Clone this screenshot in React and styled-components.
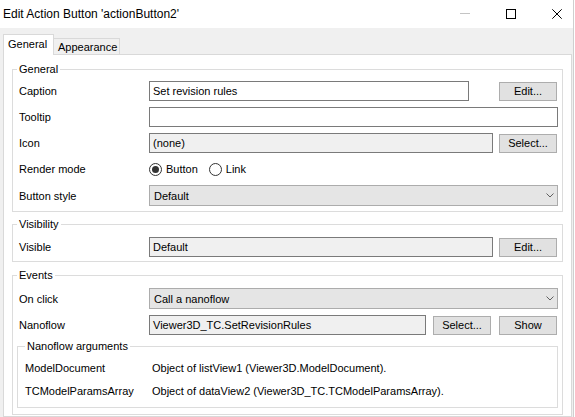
import React from "react";
import styled, { createGlobalStyle } from "styled-components";

const GlobalStyle = createGlobalStyle`
  html, body {
    margin: 0;
    padding: 0;
    background: #fff;
  }
  * {
    box-sizing: border-box;
  }
`;

const Window = styled.div`
  width: 574px;
  height: 417px;
  border-right: 1px solid #cfcfcf;
  background: #f0f0f0;
  overflow: hidden;
  display: flex;
  flex-direction: column;
  font-family: "Liberation Sans", Arial, sans-serif;
  font-size: 11px;
  color: #000;
`;

const TitleBar = styled.div`
  height: 28px;
  flex: none;
  display: flex;
  align-items: center;
  background: #fff;
`;

const Title = styled.div`
  flex: 1;
  padding-left: 3px;
  font-size: 12px;
  line-height: 16px;
  white-space: nowrap;
`;

const WindowControls = styled.div`
  display: flex;
  margin-right: -7px;
`;

const ControlButton = styled.div`
  width: 46px;
  height: 28px;
  display: flex;
  align-items: center;
  justify-content: center;
`;

const Body = styled.div`
  flex: 1;
  display: flex;
  flex-direction: column;
  padding-top: 6px;
  min-height: 0;
`;

const TabStrip = styled.div`
  display: flex;
  align-items: flex-end;
  height: 20px;
  padding-left: 3px;
  flex: none;
`;

const Tab = styled.div`
  display: flex;
  align-items: center;
  white-space: nowrap;
  padding-left: 4px;
  border: 1px solid #d9d9d9;
  border-bottom: none;
  ${({ $active }) =>
    $active
      ? `
    width: 51px;
    height: 21px;
    margin-bottom: -1px;
    padding-bottom: 2px;
    background: #fff;
    position: relative;
    z-index: 1;
  `
      : `
    width: 66px;
    height: 16px;
    border-left: none;
    background: #f0f0f0;
  `}
`;

const TabPanel = styled.div`
  margin-left: 3px;
  width: 569px;
  flex: 1;
  background: #fff;
  border: 1px solid #d9d9d9;
  padding: 6px 8px 1px;
  display: flex;
  flex-direction: column;
  gap: 4px;
`;

const Group = styled.fieldset`
  margin: ${({ $mt }) => $mt || 0}px 0 0;
  padding: 0 ${({ $px }) => $px ?? 4}px ${({ $pb }) => $pb}px;
  border: 1px solid #dcdcdc;
  min-width: 0;
`;

const Legend = styled.legend`
  padding: 0 2px;
  line-height: 16px;
  font-size: 11px;
`;

const Rows = styled.div`
  display: flex;
  flex-direction: column;
  gap: ${({ $gap }) => $gap ?? 6}px;
  margin-top: ${({ $mt }) => $mt}px;
`;

const Row = styled.div`
  display: grid;
  grid-template-columns: ${({ $labelWidth }) => $labelWidth || 132}px 1fr;
  align-items: center;
  height: ${({ $h }) => $h || 20}px;
`;

const Label = styled.div`
  padding-left: ${({ $pl }) => $pl ?? 2}px;
  white-space: nowrap;
`;

const Value = styled.div`
  white-space: nowrap;
`;

const Field = styled.div`
  display: flex;
  align-items: center;
  gap: ${({ $gap }) => $gap || 0}px;
  height: 100%;
`;

const TextBox = styled.div`
  height: 20px;
  border: 1px solid #7a7a7a;
  background: ${({ $readOnly }) => ($readOnly ? "#f0f0f0" : "#fff")};
  padding: 0 3px;
  line-height: 18px;
  white-space: nowrap;
  overflow: hidden;
  ${({ $width }) => ($width ? `width: ${$width}px; flex: none;` : "flex: 1;")}
`;

const PushButton = styled.button`
  width: 58px;
  height: 19px;
  flex: none;
  padding: 0;
  margin: ${({ $auto }) => ($auto ? "0 1px 0 auto" : "0")};
  background: #e1e1e1;
  border: 1px solid #adadad;
  border-radius: 0;
  font: inherit;
  color: #000;
  line-height: 17px;
  text-align: center;
`;

const Buttons = styled.div`
  display: flex;
  gap: 8px;
  margin-right: 1px;
`;

const ComboBox = styled.div`
  height: 21px;
  display: flex;
  align-items: center;
  justify-content: space-between;
  background: #e5e5e5;
  border: 1px solid #acacac;
  padding: 0 3px 0 4px;
`;

const RadioGroup = styled.div`
  display: flex;
  align-items: center;
  gap: 11px;
`;

const RadioOption = styled.div`
  display: flex;
  align-items: center;
  gap: 4px;
`;

const RadioCircle = styled.span`
  width: 13px;
  height: 13px;
  border: 1px solid #333;
  border-radius: 50%;
  display: flex;
  align-items: center;
  justify-content: center;
  background: #fff;

  &::after {
    content: "";
    display: ${({ $checked }) => ($checked ? "block" : "none")};
    width: 7px;
    height: 7px;
    border-radius: 50%;
    background: #333;
  }
`;

const Chevron = () => (
  <svg width="8" height="5" viewBox="0 0 8 5">
    <polyline points="0.5,0.5 4,4 7.5,0.5" fill="none" stroke="#606060" strokeWidth="1" />
  </svg>
);

const Radio = ({ checked, children }) => (
  <RadioOption>
    <RadioCircle $checked={checked} />
    {children}
  </RadioOption>
);

const App = () => {
  return (
    <>
      <GlobalStyle />
      <Window>
        <TitleBar>
          <Title>Edit Action Button 'actionButton2'</Title>
          <WindowControls>
            <ControlButton>
              <svg width="10" height="10" viewBox="0 0 10 10">
                <line x1="0" y1="4.5" x2="10" y2="4.5" stroke="#c4c4c4" strokeWidth="1" />
              </svg>
            </ControlButton>
            <ControlButton>
              <svg width="10" height="10" viewBox="0 0 10 10">
                <rect x="0.5" y="0.5" width="9" height="9" fill="none" stroke="#000" strokeWidth="1" />
              </svg>
            </ControlButton>
            <ControlButton>
              <svg width="10" height="10" viewBox="0 0 10 10">
                <path d="M0.3 0.3 L9.7 9.7 M9.7 0.3 L0.3 9.7" stroke="#000" strokeWidth="1" />
              </svg>
            </ControlButton>
          </WindowControls>
        </TitleBar>

        <Body>
          <TabStrip>
            <Tab $active>General</Tab>
            <Tab>Appearance</Tab>
          </TabStrip>

          <TabPanel>
            <Group $pb={5}>
              <Legend>General</Legend>
              <Rows $mt={4}>
                <Row>
                  <Label>Caption</Label>
                  <Field>
                    <TextBox $width={320}>Set revision rules</TextBox>
                    <PushButton $auto>Edit...</PushButton>
                  </Field>
                </Row>
                <Row>
                  <Label>Tooltip</Label>
                  <Field>
                    <TextBox />
                  </Field>
                </Row>
                <Row>
                  <Label>Icon</Label>
                  <Field $gap={6}>
                    <TextBox $readOnly>(none)</TextBox>
                    <Buttons>
                      <PushButton>Select...</PushButton>
                    </Buttons>
                  </Field>
                </Row>
                <Row>
                  <Label>Render mode</Label>
                  <RadioGroup>
                    <Radio checked>Button</Radio>
                    <Radio>Link</Radio>
                  </RadioGroup>
                </Row>
                <Row $h={21}>
                  <Label>Button style</Label>
                  <ComboBox>
                    <span>Default</span>
                    <Chevron />
                  </ComboBox>
                </Row>
              </Rows>
            </Group>

            <Group $pb={4}>
              <Legend>Visibility</Legend>
              <Rows $mt={5}>
                <Row>
                  <Label>Visible</Label>
                  <Field $gap={6}>
                    <TextBox $readOnly>Default</TextBox>
                    <Buttons>
                      <PushButton>Edit...</PushButton>
                    </Buttons>
                  </Field>
                </Row>
              </Rows>
            </Group>

            <Group $pb={6} $mt={1}>
              <Legend>Events</Legend>
              <Rows $mt={5}>
                <Row $h={21}>
                  <Label>On click</Label>
                  <ComboBox>
                    <span>Call a nanoflow</span>
                    <Chevron />
                  </ComboBox>
                </Row>
                <Row>
                  <Label>Nanoflow</Label>
                  <Field $gap={7}>
                    <TextBox $readOnly>Viewer3D_TC.SetRevisionRules</TextBox>
                    <Buttons>
                      <PushButton>Select...</PushButton>
                      <PushButton>Show</PushButton>
                    </Buttons>
                  </Field>
                </Row>
              </Rows>

              <Group $mt={3} $px={7} $pb={8}>
                <Legend>Nanoflow arguments</Legend>
                <Rows $mt={6} $gap={7}>
                  <Row $labelWidth={127} $h={16}>
                    <Label $pl={0}>ModelDocument</Label>
                    <Value>Object of listView1 (Viewer3D.ModelDocument).</Value>
                  </Row>
                  <Row $labelWidth={127} $h={16}>
                    <Label $pl={0}>TCModelParamsArray</Label>
                    <Value>Object of dataView2 (Viewer3D_TC.TCModelParamsArray).</Value>
                  </Row>
                </Rows>
              </Group>
            </Group>
          </TabPanel>
        </Body>
      </Window>
    </>
  );
};

export default App;
